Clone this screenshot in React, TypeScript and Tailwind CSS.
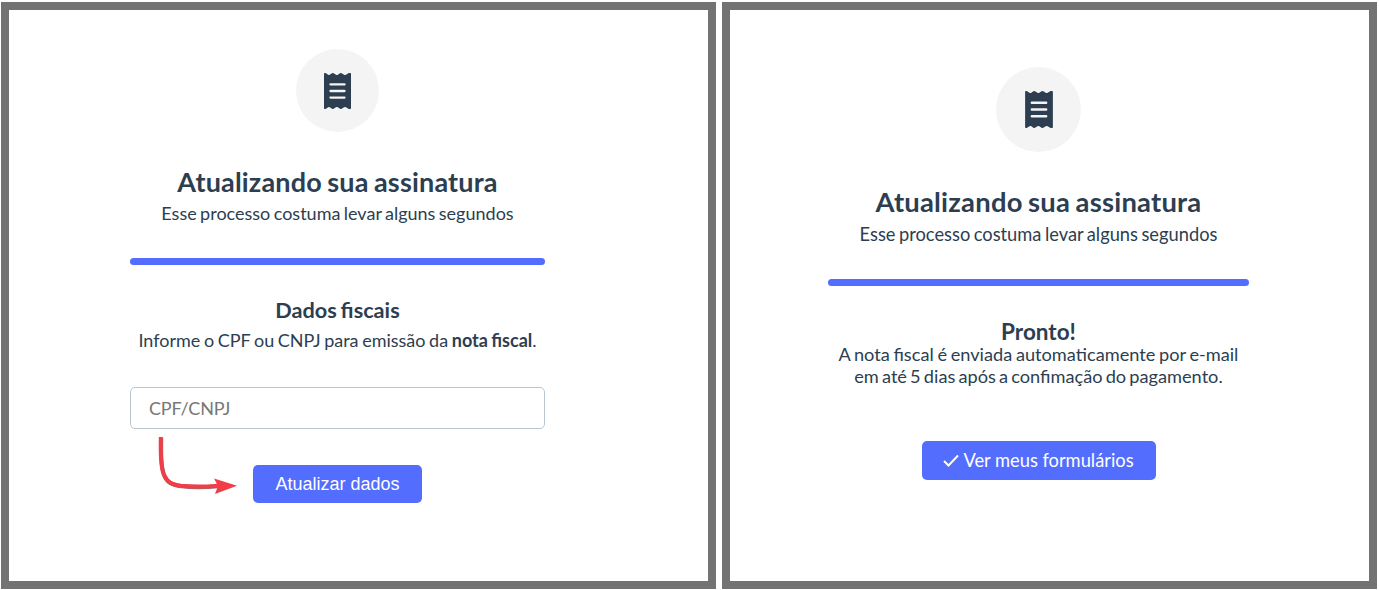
import type { ReactNode } from 'react';

function ReceiptIcon({ className }: { className: string }) {
  return (
    <svg viewBox="0 0 27 36" fill="none" className={className}>
      <path
        d="M0 .8Q0 0 .8 0H1.6L4.2 1.7Q5.2 2.3 6.1 1.6L8 .3Q8.8-.2 9.6.3L12 1.7Q12.9 2.3 13.8 1.7L16 .3Q16.8-.2 17.6.3L20.1 1.7Q21 2.3 21.9 1.7L24.8 0H26.2Q27 0 27 .8V35.2Q27 36 26.2 36H24.8L21.9 34.3Q21 33.7 20.1 34.3L17.6 35.7Q16.8 36.2 16 35.7L13.8 34.3Q12.9 33.7 12 34.3L9.6 35.7Q8.8 36.2 8 35.7L6.1 34.4Q5.2 33.7 4.2 34.3L1.6 36H.8Q0 36 0 35.2Z"
        fill="#2c3e50"
      />
      <path d="M6.5 11.4H20.5M6.5 18H20.5M6.5 24.6H20.5" stroke="#f4f4f4" strokeWidth="2.3" strokeLinecap="round" />
    </svg>
  );
}

function Panel({ className, children }: { className: string; children: ReactNode }) {
  return (
    <section className={`flex shrink-0 flex-col border-8 border-[#737373] bg-white ${className}`}>
      {children}
    </section>
  );
}

function App() {
  return (
    <div className="flex h-[590px] w-[1379px] gap-[6px] overflow-hidden bg-white pt-[2px] pl-px font-['Lato',sans-serif] text-[#2c3e50]">
      <Panel className="h-[587px] w-[715px] pt-[39px] pl-[121px]">
        <div className="flex w-[415px] flex-col items-center text-center">
          <div className="flex size-[83px] items-center justify-center rounded-full bg-[#f4f4f4]">
            <ReceiptIcon className="h-9 w-[27px]" />
          </div>
          <h1 className="mt-[34px] text-[27px] leading-8 font-bold tracking-[0.18px] whitespace-nowrap [word-spacing:-1.4px]">
            Atualizando sua assinatura
          </h1>
          <p className="mt-[3px] text-[18px] leading-6 whitespace-nowrap [word-spacing:-1.2px]">
            Esse processo costuma levar alguns segundos
          </p>
          <div className="mt-[33px] h-[7px] w-full rounded-full bg-[#536dfe]" />
          <h2 className="mt-[31px] text-[21.7px] leading-7 font-bold whitespace-nowrap [word-spacing:-1.5px]">Dados fiscais</h2>
          <p className="mt-1 text-[18px] leading-6 whitespace-nowrap [word-spacing:-1px]">
            Informe o CPF ou CNPJ para emissão da <strong>nota fiscal</strong>.
          </p>
          <input
            type="text"
            placeholder="CPF/CNPJ"
            className="mt-[35px] h-[42px] w-full rounded-[5px] border border-[#b8c7d2] px-[18px] text-[18px] tracking-[-0.2px] placeholder:text-[#777777]"
          />
          <div className="relative mt-9">
            <svg viewBox="0 0 82 62" fill="none" className="absolute -top-[30px] -left-[96px] h-[62px] w-[82px]">
              <path d="M3.8 2.2C3.8 15 2.8 31 7 40C10 47.5 15 49.5 24 50.7C36 52 47 51.8 61 50.7" stroke="#8d7073" strokeWidth="4" transform="translate(.4 .6)" />
              <path d="M3.8 2C3.8 15 2.8 31 7 40C10 47.5 15 49.5 24 50.7C36 52 47 51.8 61 50.7" stroke="#f13d47" strokeWidth="4" />
              <path d="M57 43.5L80 50.8L58 59L61 51Z" fill="#f13d47" />
            </svg>
            <button className="h-[38px] w-[169px] rounded-[5px] bg-[#536dfe] font-['Liberation_Sans',Arial,sans-serif] text-[18px] text-white">
              Atualizar dados
            </button>
          </div>
        </div>
      </Panel>

      <Panel className="h-[587px] w-[655px] pt-[57px] pl-[98px]">
        <div className="flex w-[421px] flex-col items-center text-center">
          <div className="flex size-[85px] items-center justify-center rounded-full bg-[#f4f4f4]">
            <ReceiptIcon className="h-[37px] w-[28px]" />
          </div>
          <h1 className="mt-[34px] text-[27.4px] leading-8 font-bold tracking-[0.22px] whitespace-nowrap [word-spacing:-1.4px]">
            Atualizando sua assinatura
          </h1>
          <p className="mt-1 text-[18.3px] leading-6 whitespace-nowrap [word-spacing:-1.2px]">
            Esse processo costuma levar alguns segundos
          </p>
          <div className="mt-[33px] h-[7px] w-full rounded-full bg-[#536dfe]" />
          <h2 className="mt-8 text-[22.5px] leading-7 font-bold whitespace-nowrap">Pronto!</h2>
          <p className="-mt-[3px] text-[18.2px] leading-[22px] whitespace-nowrap [word-spacing:-1px]">
            A nota fiscal é enviada automaticamente por e-mail
            <br />
            <span className="[word-spacing:-1.5px]">em até 5 dias após a confimação do pagamento.</span>
          </p>
          <button className="mt-[54px] flex h-[39px] w-[234px] items-center justify-center gap-1 rounded-[5px] bg-[#536dfe] text-[18.3px] text-white">
            <svg viewBox="0 0 16 13" fill="none" className="h-[13px] w-4">
              <path d="M1 7L5.5 11.5L15 1.5" stroke="currentColor" strokeWidth="2" />
            </svg>
            Ver meus formulários
          </button>
        </div>
      </Panel>
    </div>
  );
}

export default App;
